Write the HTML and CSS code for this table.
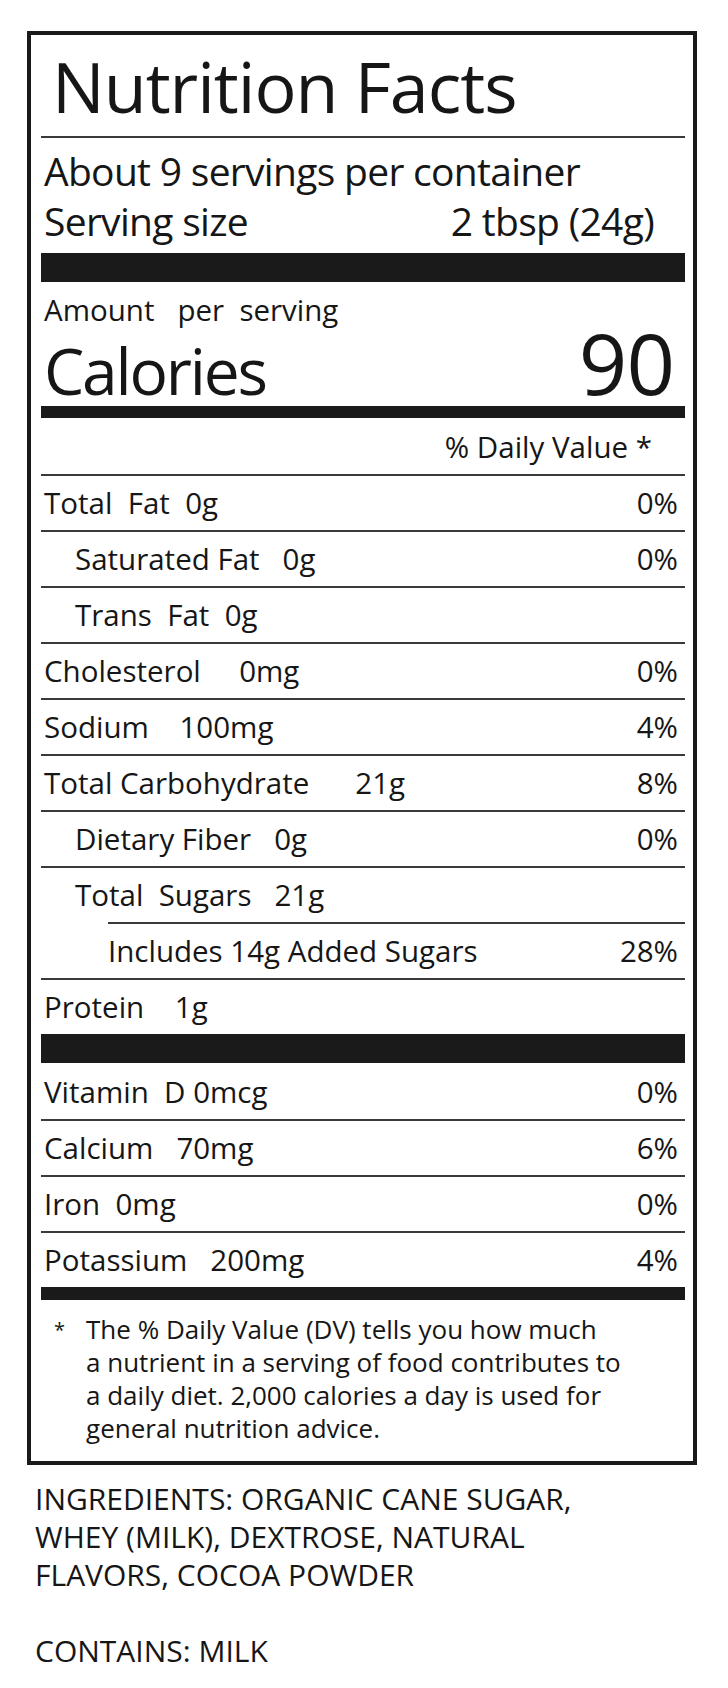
FILE: index.html
```html
<!DOCTYPE html>
<html lang="en">
<head>
<meta charset="utf-8">
<title>Nutrition Facts</title>
<link rel="stylesheet" href="styles.css">
</head>
<body>
<main class="page">
  <section class="label">
    <h1 class="title">Nutrition Facts</h1>
    <div class="servings">
      <p class="servings-line">About 9 servings per container</p>
      <p class="servings-line split"><span>Serving size</span><span>2 tbsp (24g)</span></p>
    </div>
    <div class="bar bar-thick"></div>
    <div class="calories">
      <p class="amount">Amount   per  serving</p>
      <p class="cal-row"><span class="cal-label">Calories</span><span class="cal-value">90</span></p>
    </div>
    <div class="bar bar-mid"></div>
    <div class="dv-head">% Daily Value *</div>
    <ul class="rows">
      <li class="row"><span>Total  Fat  0g</span><span>0%</span></li>
      <li class="row sub"><span>Saturated Fat   0g</span><span>0%</span></li>
      <li class="row sub"><span>Trans  Fat  0g</span><span></span></li>
      <li class="row"><span>Cholesterol     0mg</span><span>0%</span></li>
      <li class="row"><span>Sodium    100mg</span><span>4%</span></li>
      <li class="row"><span>Total Carbohydrate      21g</span><span>8%</span></li>
      <li class="row sub"><span>Dietary Fiber   0g</span><span>0%</span></li>
      <li class="row sub"><span>Total  Sugars   21g</span><span></span></li>
      <li class="row added"><span>Includes 14g Added Sugars</span><span>28%</span></li>
      <li class="row"><span>Protein    1g</span><span></span></li>
    </ul>
    <div class="bar bar-thick"></div>
    <ul class="rows">
      <li class="row first"><span>Vitamin  D 0mcg</span><span>0%</span></li>
      <li class="row"><span>Calcium   70mg</span><span>6%</span></li>
      <li class="row"><span>Iron  0mg</span><span>0%</span></li>
      <li class="row"><span>Potassium   200mg</span><span>4%</span></li>
    </ul>
    <div class="bar bar-foot"></div>
    <div class="footnote">
      <span class="star">*</span>
      <p class="foot-text">The % Daily Value (DV) tells you how much<br>a nutrient in a serving of food contributes to<br>a daily diet. 2,000 calories a day is used for<br>general nutrition advice.</p>
    </div>
  </section>
  <section class="ingredients">
    <p>INGREDIENTS: ORGANIC CANE SUGAR,<br>WHEY (MILK), DEXTROSE, NATURAL<br>FLAVORS, COCOA POWDER</p>
    <p class="contains">CONTAINS: MILK</p>
  </section>
</main>
</body>
</html>
```

FILE: styles.css
```css
* { box-sizing: border-box; }

html, body {
  margin: 0;
  padding: 0;
  background: #ffffff;
}

body {
  font-family: "Open Sans", "Noto Sans", "Liberation Sans", sans-serif;
  color: #161616;
}

p, h1, ul { margin: 0; padding: 0; }

.page {
  width: 728px;
  height: 1688px;
  padding-top: 31px;
}

.label {
  margin-left: 27px;
  width: 670px;
  border: 4px solid #1a1a1a;
  padding: 0 8px 0 10px;
}

.title {
  height: 103px;
  line-height: 103px;
  font-size: 70px;
  font-weight: 400;
  letter-spacing: -1px;
  padding-left: 11px;
  border-bottom: 2px solid #3a3a3a;
}

.servings {
  height: 115px;
  padding: 8px 31px 0 3px;
}

.servings-line {
  font-size: 39px;
  line-height: 50px;
  letter-spacing: -0.7px;
}

.split {
  display: flex;
  justify-content: space-between;
}

.bar { background: #1a1a1a; }
.bar-thick { height: 29px; }
.bar-mid { height: 12px; }
.bar-foot { height: 13px; }

.calories {
  height: 124px;
  padding: 10px 11px 0 3px;
}

.amount {
  font-size: 29.5px;
  line-height: 36px;
  white-space: pre;
}

.cal-row {
  margin-top: 4px;
  display: flex;
  justify-content: space-between;
  align-items: baseline;
  line-height: 60px;
}

.cal-label { font-size: 64px; letter-spacing: -2.2px; }
.cal-value { font-size: 85px; letter-spacing: -1px; }

.dv-head {
  height: 56px;
  line-height: 57px;
  font-size: 29.5px;
  text-align: right;
  padding-right: 33px;
}

.rows { list-style: none; }

.row {
  height: 56px;
  border-top: 2px solid #3a3a3a;
  display: flex;
  justify-content: space-between;
  align-items: flex-start;
  font-size: 29.5px;
  line-height: 53px;
  padding: 0 7px 0 3px;
  white-space: pre;
}

.row.sub { padding-left: 34px; }
.row.added { margin-left: 67px; padding-left: 0; }
.row.first { border-top-color: transparent; }

.footnote {
  height: 161px;
  padding: 13px 0 0 13px;
  display: flex;
  gap: 21px;
}

.star {
  font-size: 20px;
  line-height: 33px;
}

.foot-text {
  font-size: 26px;
  line-height: 33px;
}

.ingredients {
  margin: 15px 0 0 35px;
  font-size: 30px;
  line-height: 38px;
}

.contains { margin-top: 38px; }
```
